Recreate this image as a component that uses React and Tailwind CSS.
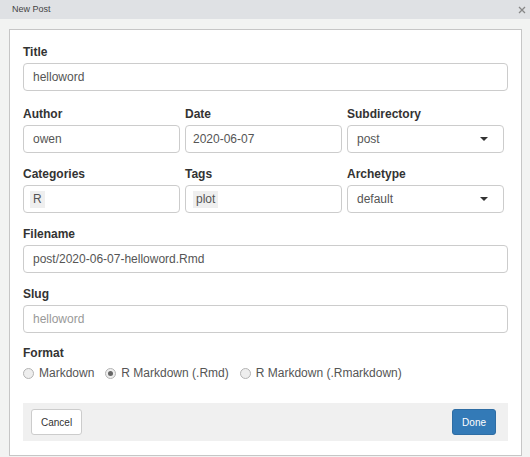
import React from 'react';

const Label = ({ children }) => (
  <div className="text-[12px] leading-[14px] font-bold text-[#333] mb-[4px]">{children}</div>
);

const Field = ({ children, className = '' }) => (
  <div
    className={`h-[28px] border border-[#ccc] rounded-[4px] bg-white flex items-center text-[12px] text-[#555] ${className}`}
  >
    {children}
  </div>
);

const Chip = ({ children }) => (
  <span className="bg-[#efefef] px-[3px] leading-[17px] text-[#555]">{children}</span>
);

const Caret = () => (
  <span className="w-0 h-0 border-l-[4px] border-r-[4px] border-t-[4px] border-l-transparent border-r-transparent border-t-[#333]" />
);

const Radio = ({ checked, label }) => (
  <div className="flex items-center gap-[5px]">
    <span className="w-[11px] h-[11px] rounded-full border border-[#b4b4b4] bg-[#eeeeee] flex items-center justify-center">
      {checked && <span className="w-[5px] h-[5px] rounded-full bg-[#666]" />}
    </span>
    <span className="text-[12px] leading-[14px] text-[#555]">{label}</span>
  </div>
);

export default function App() {
  return (
    <div className="w-[530px] h-[457px] bg-[#f2f3f2] font-['Liberation_Sans',Arial,sans-serif] overflow-hidden">
      {/* barre de titre */}
      <div className="h-[19px] bg-[#dfe1e4] flex items-center justify-between pl-[12px] pr-[4px]">
        <span className="text-[9px] text-[#444]">New Post</span>
        <svg width="8" height="8" viewBox="0 0 8 8">
          <path d="M1 1L7 7M7 1L1 7" stroke="#888" strokeWidth="1.3" />
        </svg>
      </div>

      <div className="ml-[9px] mt-[10px] w-[513px] border border-[#c6c6c6] bg-white px-[13px] pt-[15px] pb-[14px]">
        <div className="mb-[16px]">
          <Label>Title</Label>
          <Field className="pl-[9px]">helloword</Field>
        </div>

        <div className="grid grid-cols-[157px_157px_157px] gap-x-[5px] mb-[14px]">
          <div>
            <Label>Author</Label>
            <Field className="pl-[9px]">owen</Field>
          </div>
          <div>
            <Label>Date</Label>
            <Field className="pl-[7px]">2020-06-07</Field>
          </div>
          <div>
            <Label>Subdirectory</Label>
            <Field className="pl-[9px] pr-[15px] justify-between">
              <span>post</span>
              <Caret />
            </Field>
          </div>
        </div>

        <div className="grid grid-cols-[157px_157px_157px] gap-x-[5px] mb-[14px]">
          <div>
            <Label>Categories</Label>
            <Field className="pl-[6px]">
              <Chip>R</Chip>
            </Field>
          </div>
          <div>
            <Label>Tags</Label>
            <Field className="pl-[7px]">
              <Chip>plot</Chip>
            </Field>
          </div>
          <div>
            <Label>Archetype</Label>
            <Field className="pl-[9px] pr-[15px] justify-between">
              <span>default</span>
              <Caret />
            </Field>
          </div>
        </div>

        <div className="mb-[14px]">
          <Label>Filename</Label>
          <Field className="pl-[9px]">post/2020-06-07-helloword.Rmd</Field>
        </div>

        <div className="mb-[13px]">
          <Label>Slug</Label>
          <Field className="pl-[9px] text-[#999]">helloword</Field>
        </div>

        <div className="text-[12px] leading-[14px] font-bold text-[#333] mb-[6px]">Format</div>
        <div className="flex items-center gap-x-[11px]">
          <Radio label="Markdown" />
          <Radio checked label="R Markdown (.Rmd)" />
          <Radio label="R Markdown (.Rmarkdown)" />
        </div>

        <div className="mt-[23px] h-[38px] bg-[#f0f0f0] flex items-center justify-between pl-[8px] pr-[12px]">
          <button className="h-[26px] px-[9px] border border-[#ccc] rounded-[3px] bg-white text-[10px] text-[#333]">
            Cancel
          </button>
          <button className="h-[26px] px-[9px] border border-[#2e6da4] rounded-[3px] bg-[#337ab7] text-[10px] text-white">
            Done
          </button>
        </div>
      </div>
    </div>
  );
}
